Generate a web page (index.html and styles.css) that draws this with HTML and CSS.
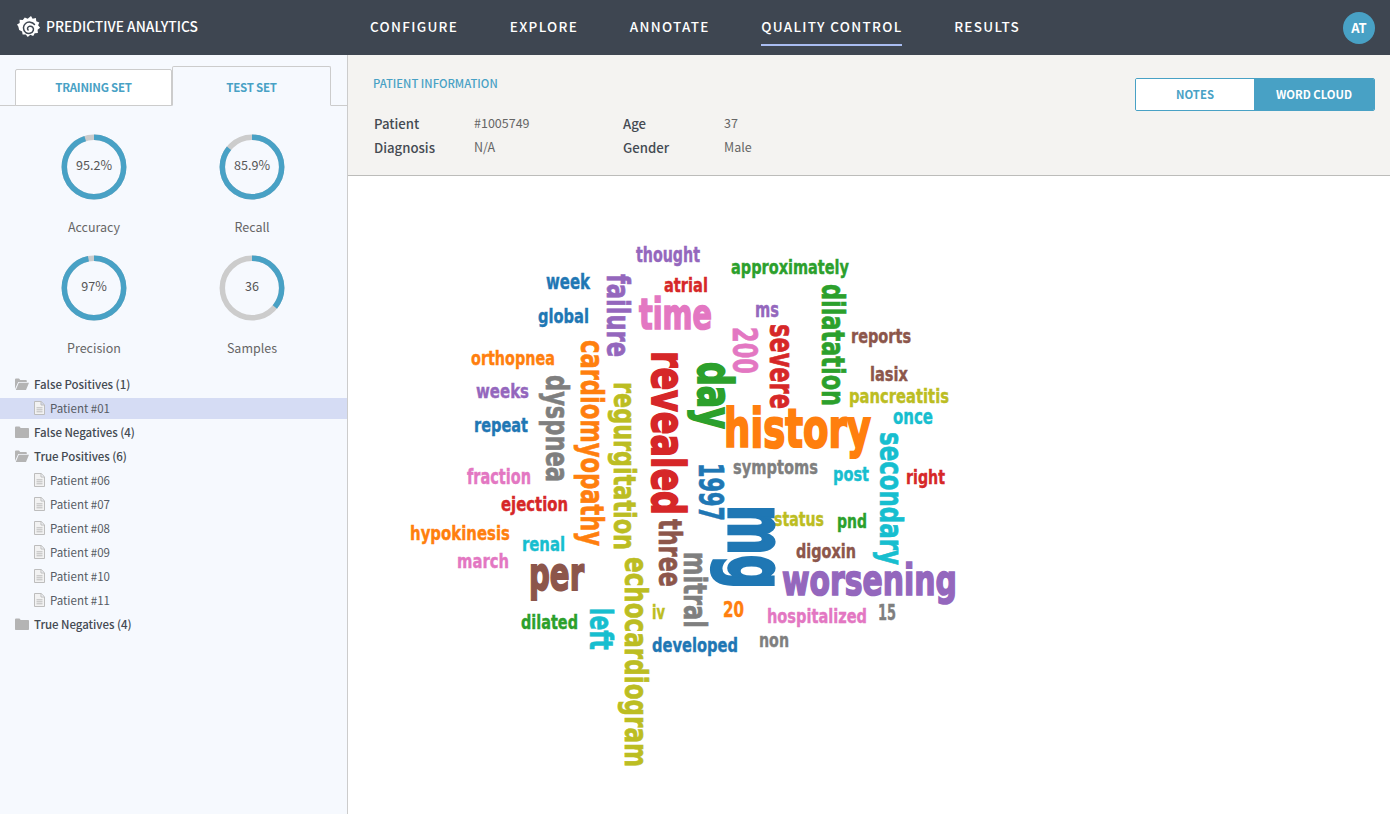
FILE: index.html
```html
<!DOCTYPE html>
<html lang="en">
<head>
<meta charset="utf-8">
<title>Predictive Analytics</title>
<link rel="stylesheet" href="styles.css">
</head>
<body>
<header class="topbar">
  <div class="brand">
    <svg class="logo" viewBox="0 0 24 24" width="24" height="25"><path class="logo-cog" d="M14 .5l1.600 2.800 3.300-.8.400 3.200 3 1.200-1.200 2.900 2 2.500-2.500 1.900.3 3.200-3.200.3-1.500 2.900-2.900-1.300-2.500 2.100-2-2.500-3.200.2-.5-3.200-2.900-1.500L1.300 11 0 9l2.700-1.600-.1-3.200 3.200.2L7.800 2l2.900 1.200z"/><path class="logo-spiral" d="M17.500 9C15.500 6.300 11 5.800 8.500 8 5.800 10.200 5.800 14.500 8.500 16.800c2.800 2.100 6.800 1.200 7.800-1.700.8-2.600-1.200-4.800-3.600-4.400-2 .3-2.800 2.400-1.600 3.700"/></svg>
    <span class="brand-name">PREDICTIVE ANALYTICS</span>
  </div>
  <nav class="nav">
    <a class="nav-item">CONFIGURE</a>
    <a class="nav-item">EXPLORE</a>
    <a class="nav-item">ANNOTATE</a>
    <a class="nav-item active">QUALITY CONTROL</a>
    <a class="nav-item">RESULTS</a>
  </nav>
  <div class="avatar">AT</div>
</header>
<div class="body">
  <aside class="sidebar">
    <div class="tabs">
      <div class="tab">TRAINING SET</div>
      <div class="tab current">TEST SET</div>
    </div>
    <div class="gauges">
      <figure class="gauge">
        <div class="ring"><svg viewBox="0 0 66 66" width="66" height="66"><circle class="track" cx="33" cy="33" r="29.700"/><circle class="value" cx="33" cy="33" r="29.700" pathLength="100" stroke-dasharray="95.2 100"/></svg><span>95.2%</span></div>
        <figcaption>Accuracy</figcaption>
      </figure>
      <figure class="gauge">
        <div class="ring"><svg viewBox="0 0 66 66" width="66" height="66"><circle class="track" cx="33" cy="33" r="29.700"/><circle class="value" cx="33" cy="33" r="29.700" pathLength="100" stroke-dasharray="85.9 100"/></svg><span>85.9%</span></div>
        <figcaption>Recall</figcaption>
      </figure>
      <figure class="gauge">
        <div class="ring"><svg viewBox="0 0 66 66" width="66" height="66"><circle class="track" cx="33" cy="33" r="29.700"/><circle class="value" cx="33" cy="33" r="29.700" pathLength="100" stroke-dasharray="97 100"/></svg><span>97%</span></div>
        <figcaption>Precision</figcaption>
      </figure>
      <figure class="gauge">
        <div class="ring"><svg viewBox="0 0 66 66" width="66" height="66"><circle class="track" cx="33" cy="33" r="29.700"/><circle class="value" cx="33" cy="33" r="29.700" pathLength="100" stroke-dasharray="36 100"/></svg><span>36</span></div>
        <figcaption>Samples</figcaption>
      </figure>
    </div>
    <svg class="defs" width="0" height="0">
      <symbol id="folder-open" viewBox="0 0 14 12"><path d="M0 11V1.500C0 1 .4.600 1 .600h3l1.200 1.300H11c.5 0 .8.300.8.800V4H3.200L0 11zM3.800 4.800H14L11 12H.8z"/></symbol>
      <symbol id="folder" viewBox="0 0 14 12"><path d="M0 1.500C0 1 .4.600 1 .600h3.500l1.200 1.300H13c.6 0 1 .4 1 1V11c0 .6-.4 1-1 1H1c-.6 0-1-.4-1-1z"/></symbol>
      <symbol id="file" viewBox="0 0 11 14"><path class="file-line" d="M.5.500h6.700l3.300 3.300v9.700H.5zM7 .7V4h3.300M2.500 6.800h6M2.500 8.800h6M2.500 10.800h6"/></symbol>
    </svg>
    <ul class="tree">
      <li class="folder-row"><svg class="ico-folder"><use href="#folder-open"/></svg>False Positives (1)</li>
      <li class="file-row selected"><svg class="ico-file"><use href="#file"/></svg>Patient #01</li>
      <li class="folder-row"><svg class="ico-folder"><use href="#folder"/></svg>False Negatives (4)</li>
      <li class="folder-row"><svg class="ico-folder"><use href="#folder-open"/></svg>True Positives (6)</li>
      <li class="file-row"><svg class="ico-file"><use href="#file"/></svg>Patient #06</li>
      <li class="file-row"><svg class="ico-file"><use href="#file"/></svg>Patient #07</li>
      <li class="file-row"><svg class="ico-file"><use href="#file"/></svg>Patient #08</li>
      <li class="file-row"><svg class="ico-file"><use href="#file"/></svg>Patient #09</li>
      <li class="file-row"><svg class="ico-file"><use href="#file"/></svg>Patient #10</li>
      <li class="file-row"><svg class="ico-file"><use href="#file"/></svg>Patient #11</li>
      <li class="folder-row"><svg class="ico-folder"><use href="#folder"/></svg>True Negatives (4)</li>
    </ul>
  </aside>
  <main class="main">
    <section class="info">
      <div class="info-left">
        <h2 class="info-title">PATIENT INFORMATION</h2>
        <dl class="info-grid">
          <dt>Patient</dt><dd>#1005749</dd><dt>Age</dt><dd>37</dd>
          <dt>Diagnosis</dt><dd>N/A</dd><dt>Gender</dt><dd>Male</dd>
        </dl>
      </div>
      <div class="toggle">
        <div class="toggle-btn">NOTES</div>
        <div class="toggle-btn on">WORD CLOUD</div>
      </div>
    </section>
    <section class="cloud-wrap">
      <svg class="cloud" viewBox="348 176 1042 638" width="1042" height="638">
        <g class="wh">
          <text class="c5" x="636" y="262" font-size="21" textLength="64" lengthAdjust="spacingAndGlyphs">thought</text>
          <text class="c1" x="546" y="289" font-size="21" textLength="44" lengthAdjust="spacingAndGlyphs">week</text>
          <text class="c1" x="538" y="323" font-size="20" textLength="51" lengthAdjust="spacingAndGlyphs">global</text>
          <text class="c4" x="664" y="292" font-size="20" textLength="44" lengthAdjust="spacingAndGlyphs">atrial</text>
          <text class="c7 big" x="639" y="329" font-size="43" textLength="73" lengthAdjust="spacingAndGlyphs">time</text>
          <text class="c2" x="471" y="365" font-size="20" textLength="84" lengthAdjust="spacingAndGlyphs">orthopnea</text>
          <text class="c5" x="476" y="398" font-size="20" textLength="53" lengthAdjust="spacingAndGlyphs">weeks</text>
          <text class="c1" x="474" y="432" font-size="20" textLength="54" lengthAdjust="spacingAndGlyphs">repeat</text>
          <text class="c7" x="467" y="484" font-size="21" textLength="64" lengthAdjust="spacingAndGlyphs">fraction</text>
          <text class="c4" x="501" y="511" font-size="20" textLength="67" lengthAdjust="spacingAndGlyphs">ejection</text>
          <text class="c2" x="410" y="540" font-size="20" textLength="100" lengthAdjust="spacingAndGlyphs">hypokinesis</text>
          <text class="c10" x="522" y="551" font-size="20" textLength="43" lengthAdjust="spacingAndGlyphs">renal</text>
          <text class="c7" x="457" y="568" font-size="20" textLength="52" lengthAdjust="spacingAndGlyphs">march</text>
          <text class="c6 big" x="529" y="590" font-size="47" textLength="55" lengthAdjust="spacingAndGlyphs">per</text>
          <text class="c3" x="521" y="629" font-size="20" textLength="57" lengthAdjust="spacingAndGlyphs">dilated</text>
          <text class="c9" x="652" y="619" font-size="20" textLength="13" lengthAdjust="spacingAndGlyphs">iv</text>
          <text class="c1" x="652" y="652" font-size="20" textLength="86" lengthAdjust="spacingAndGlyphs">developed</text>
          <text class="c3" x="731" y="274" font-size="20" textLength="118" lengthAdjust="spacingAndGlyphs">approximately</text>
          <text class="c5" x="755" y="317" font-size="22" textLength="24" lengthAdjust="spacingAndGlyphs">ms</text>
          <text class="c6" x="851" y="343" font-size="20" textLength="60" lengthAdjust="spacingAndGlyphs">reports</text>
          <text class="c6" x="870" y="381" font-size="20" textLength="38" lengthAdjust="spacingAndGlyphs">lasix</text>
          <text class="c9" x="849" y="403" font-size="20" textLength="100" lengthAdjust="spacingAndGlyphs">pancreatitis</text>
          <text class="c10" x="893" y="424" font-size="21" textLength="40" lengthAdjust="spacingAndGlyphs">once</text>
          <text class="c2 big" x="724" y="447" font-size="54" textLength="147" lengthAdjust="spacingAndGlyphs">history</text>
          <text class="c8" x="733" y="474" font-size="20" textLength="85" lengthAdjust="spacingAndGlyphs">symptoms</text>
          <text class="c10" x="833" y="481" font-size="20" textLength="36" lengthAdjust="spacingAndGlyphs">post</text>
          <text class="c4" x="906" y="484" font-size="20" textLength="39" lengthAdjust="spacingAndGlyphs">right</text>
          <text class="c9" x="774" y="526" font-size="20" textLength="50" lengthAdjust="spacingAndGlyphs">status</text>
          <text class="c3" x="837" y="528" font-size="20" textLength="30" lengthAdjust="spacingAndGlyphs">pnd</text>
          <text class="c6" x="796" y="558" font-size="20" textLength="60" lengthAdjust="spacingAndGlyphs">digoxin</text>
          <text class="c5 big" x="782" y="595" font-size="43" textLength="175" lengthAdjust="spacingAndGlyphs">worsening</text>
          <text class="c2" x="723" y="617" font-size="22" textLength="21" lengthAdjust="spacingAndGlyphs">20</text>
          <text class="c7" x="767" y="623" font-size="20" textLength="100" lengthAdjust="spacingAndGlyphs">hospitalized</text>
          <text class="c8" x="878" y="620" font-size="22" textLength="18" lengthAdjust="spacingAndGlyphs">15</text>
          <text class="c8" x="759" y="647" font-size="20" textLength="30" lengthAdjust="spacingAndGlyphs">non</text>
        </g>
        <g class="wv">
          <text class="c5" transform="translate(607 274) rotate(90)" font-size="32" textLength="83" lengthAdjust="spacingAndGlyphs">failure</text>
          <text class="c2" transform="translate(581 340) rotate(90)" font-size="32" textLength="206" lengthAdjust="spacingAndGlyphs">cardiomyopathy</text>
          <text class="c8" transform="translate(546 375) rotate(90)" font-size="32" textLength="107" lengthAdjust="spacingAndGlyphs">dyspnea</text>
          <text class="c9" transform="translate(614 382) rotate(90)" font-size="30" textLength="168" lengthAdjust="spacingAndGlyphs">regurgitation</text>
          <text class="c4 big" transform="translate(652 351) rotate(90)" font-size="47" textLength="164" lengthAdjust="spacingAndGlyphs">revealed</text>
          <text class="c6" transform="translate(659 519) rotate(90)" font-size="32" textLength="68" lengthAdjust="spacingAndGlyphs">three</text>
          <text class="c9" transform="translate(625 557) rotate(90)" font-size="32" textLength="210" lengthAdjust="spacingAndGlyphs">echocardiogram</text>
          <text class="c10" transform="translate(590 608) rotate(90)" font-size="32" textLength="42" lengthAdjust="spacingAndGlyphs">left</text>
          <text class="c8" transform="translate(684 552) rotate(90)" font-size="32" textLength="76" lengthAdjust="spacingAndGlyphs">mitral</text>
          <text class="c3" transform="translate(822 284) rotate(90)" font-size="32" textLength="122" lengthAdjust="spacingAndGlyphs">dilatation</text>
          <text class="c7" transform="translate(733 327) rotate(90)" font-size="34" textLength="47" lengthAdjust="spacingAndGlyphs">200</text>
          <text class="c4" transform="translate(770 324) rotate(90)" font-size="34" textLength="85" lengthAdjust="spacingAndGlyphs">severe</text>
          <text class="c3 big" transform="translate(698 362) rotate(90)" font-size="48" textLength="67" lengthAdjust="spacingAndGlyphs">day</text>
          <text class="c10" transform="translate(880 432) rotate(90)" font-size="32" textLength="133" lengthAdjust="spacingAndGlyphs">secondary</text>
          <text class="c1" transform="translate(699 463) rotate(90)" font-size="34" textLength="58" lengthAdjust="spacingAndGlyphs">1997</text>
          <text class="c1 big" transform="translate(728.500 505) rotate(90)" font-size="80" textLength="84" lengthAdjust="spacingAndGlyphs">mg</text>
        </g>
      </svg>
    </section>
  </main>
</div>
</body>
</html>
```
FILE: styles.css
```css
* { box-sizing: border-box; }
html, body { height: 100%; }
body {
  margin: 0;
  font-family: "Noto Sans CJK SC", "Source Sans Pro", "Noto Sans", sans-serif;
  color: #4a4f57;
  background: #fff;
  overflow: hidden;
}
.topbar {
  height: 55px;
  background: #3e4651;
  display: flex;
  align-items: center;
  padding: 0 15px 0 17px;
  color: #fff;
  position: relative;
}
.brand { display: flex; align-items: center; gap: 5px; width: 353px; }
.logo { flex: none; }
.logo-cog { fill: #fff; }
.logo-spiral { fill: none; stroke: #3e4651; stroke-width: 1.500; stroke-linecap: round; }
.brand-name { font-size: 13.800px; line-height: 20px; font-weight: 500; padding-bottom: 3px; }
.nav { display: flex; gap: 51.700px; height: 55px; flex: 1; }
.nav-item {
  font-size: 13.500px;
  line-height: 20px;
  font-weight: 500;
  letter-spacing: 1.300px;
  padding-top: 16px;
  height: 46px;
  white-space: nowrap;
}
.nav-item.active { border-bottom: 2px solid #a9bdf2; }
.avatar {
  width: 32px;
  height: 32px;
  border-radius: 50%;
  background: #48a1c5;
  font-size: 13px;
  font-weight: 700;
  text-align: center;
  line-height: 32px;
}
.body { display: flex; height: 759px; }
.sidebar {
  width: 348px;
  flex: none;
  background: #f6f9fe;
  border-right: 1px solid #ccc;
}
.tabs {
  display: flex;
  align-items: flex-end;
  height: 51px;
  padding-left: 15px;
  border-bottom: 1px solid #ccc;
}
.tab {
  width: 157px;
  height: 37px;
  margin-bottom: -1px;
  background: #fff;
  border: 1px solid #ccc;
  border-radius: 2px 2px 0 0;
  color: #48a1c5;
  font-size: 11.500px;
  letter-spacing: -.25px;
  font-weight: 700;
  line-height: 35px;
  text-align: center;
}
.tab.current {
  width: 159px;
  height: 40px;
  background: #f6f9fe;
  border-bottom-color: #f6f9fe;
  line-height: 41px;
}
.gauges {
  display: grid;
  grid-template-columns: 158px 158px;
  padding: 28px 0 0 15px;
  row-gap: 18px;
}
.gauge { margin: 0; display: flex; flex-direction: column; align-items: center; }
.ring { position: relative; width: 66px; height: 66px; }
.ring svg { display: block; transform: rotate(-90deg); }
.ring span {
  position: absolute;
  inset: 0;
  font-size: 12.600px;
  line-height: 62px;
  text-align: center;
  color: #555;
}
.track, .value { fill: none; stroke-width: 5.500; }
.track { stroke: #cccccc; }
.value { stroke: #48a1c5; }
figcaption { margin-top: 17px; font-size: 12.500px; line-height: 20px; color: #666; }
.defs { position: absolute; }
.tree { list-style: none; margin: 0; padding: 14px 0 0; }
.folder-row, .file-row { display: flex; align-items: center; height: 24px; padding-bottom: 1px; white-space: nowrap; }
.folder-row { padding-left: 15px; font-size: 11.500px; letter-spacing: -.05px; font-weight: 500; color: #444a52; }
.file-row { padding-left: 34px; font-size: 11.500px; color: #555b63; }
.file-row.selected { background: #d5dcf4; height: 21px; margin: 2px 0 1px; }
.ico-folder { width: 14px; height: 12px; margin-right: 5px; fill: #b4b4b4; flex: none; }
.ico-file { width: 11px; height: 14px; margin-right: 5px; flex: none; }
.file-line { fill: #f2f2f2; stroke: #bdbdbd; stroke-width: 1; }
.main { flex: 1; display: flex; flex-direction: column; min-width: 0; }
.info {
  height: 121px;
  background: #f4f3f1;
  border-bottom: 1px solid #bcbcba;
  display: flex;
  justify-content: space-between;
  padding: 20px 15px 0 25px;
}
.info-title {
  margin: 0;
  font-size: 11.300px;
  line-height: 16px;
  font-weight: 500;
  color: #48a1c5;
}
.info-grid {
  display: grid;
  grid-template-columns: 100px 149px 101px 80px;
  grid-auto-rows: 24px;
  margin: 19px 0 0 1px;
  align-items: center;
}
.info-grid dt { font-size: 13.200px; font-weight: 500; color: #444a52; padding-top: 3px; }
.info-grid dd { margin: 0; font-size: 12.500px; color: #666; }
.toggle {
  display: flex;
  width: 240px;
  height: 33px;
  margin-top: 3px;
  border: 1px solid #48a1c5;
  border-radius: 2px;
  overflow: hidden;
}
.toggle-btn {
  width: 118px;
  background: #fff;
  color: #48a1c5;
  font-size: 11.300px;
  font-weight: 700;
  line-height: 31px;
  text-align: center;
}
.toggle-btn.on { flex: 1; background: #48a1c5; color: #fff; }
.cloud-wrap { flex: 1; min-height: 0; }
.cloud { display: block; }
.cloud text {
  font-family: "DejaVu Sans", sans-serif;
  font-weight: 700;
  fill: currentColor;
  stroke: currentColor;
  stroke-width: .022em;
}
.cloud text.big { stroke-width: .04em; }
.c1 { color: #1f77b4; }
.c2 { color: #ff7f0e; }
.c3 { color: #2ca02c; }
.c4 { color: #d62728; }
.c5 { color: #9467bd; }
.c6 { color: #8c564b; }
.c7 { color: #e377c2; }
.c8 { color: #7f7f7f; }
.c9 { color: #bcbd22; }
.c10 { color: #17becf; }
```
